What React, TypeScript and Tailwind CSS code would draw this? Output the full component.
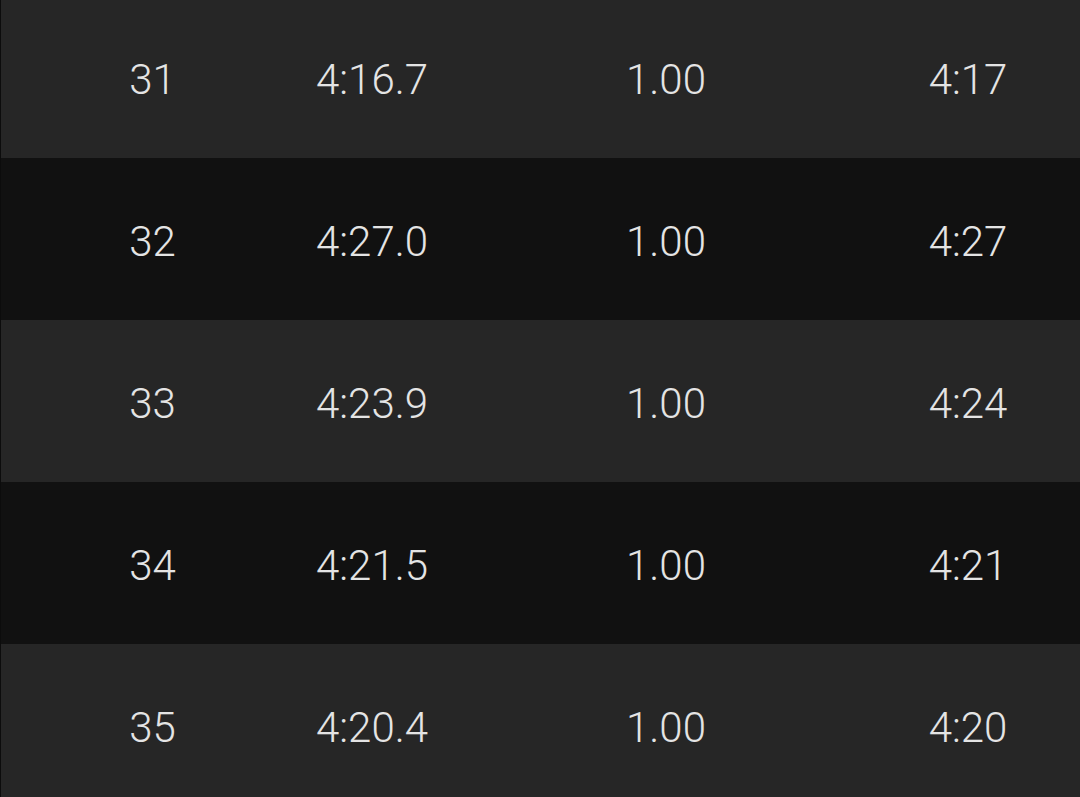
const rows = [
  { lap: '31', time: '4:16.7', dist: '1.00', pace: '4:17' },
  { lap: '32', time: '4:27.0', dist: '1.00', pace: '4:27' },
  { lap: '33', time: '4:23.9', dist: '1.00', pace: '4:24' },
  { lap: '34', time: '4:21.5', dist: '1.00', pace: '4:21' },
  { lap: '35', time: '4:20.4', dist: '1.00', pace: '4:20' },
];

export default function App() {
  return (
    <div className="h-[797px] w-[1080px] overflow-hidden bg-[#111111] border-l border-[#0c0c0c] font-['Roboto',sans-serif] font-light text-[42px] text-[#e4e4e4]">
      <div className="-mt-1">
        {rows.map((r, i) => (
          <div
            key={r.lap}
            className={`grid h-[162px] grid-cols-[303px_136px_452px_152px] items-center pt-[4px] text-center ${
              i % 2 === 0 ? 'bg-[#262626]' : 'bg-[#111111]'
            }`}
          >
            <span>{r.lap}</span>
            <span>{r.time}</span>
            <span>{r.dist}</span>
            <span>{r.pace}</span>
          </div>
        ))}
      </div>
    </div>
  );
}
